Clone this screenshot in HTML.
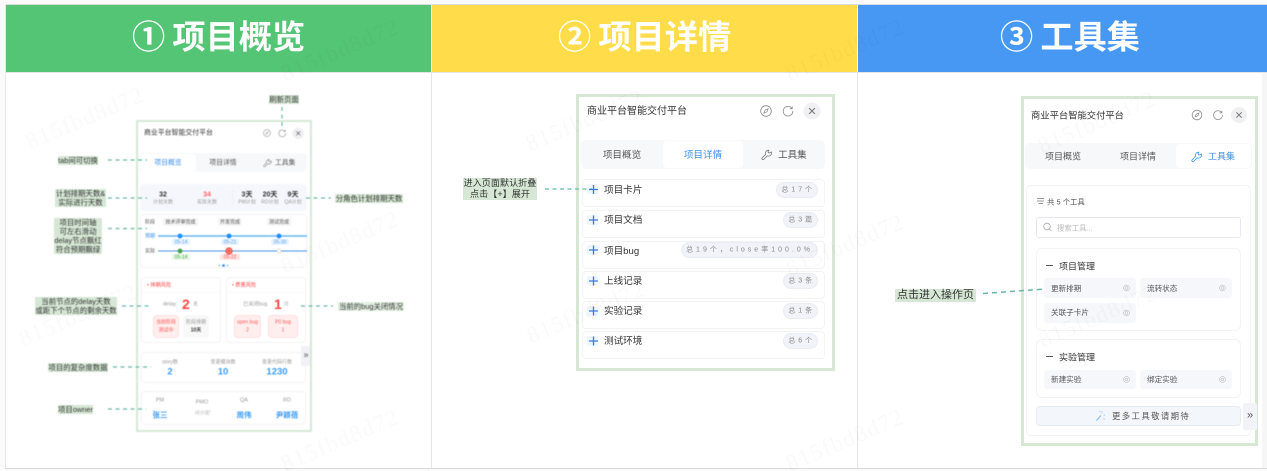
<!DOCTYPE html>
<html lang="zh"><head><meta charset="utf-8"><title>项目概览</title>
<style>
html,body{margin:0;padding:0;background:#fafafa}
#p{position:relative;width:1267px;height:471px;overflow:hidden;background:#fafafa;font-family:"Liberation Sans","Noto Sans CJK SC",sans-serif;color:#333}
.b{position:absolute;box-sizing:border-box}
.t{position:absolute;white-space:nowrap;line-height:1;transform:translateY(-50%);margin-top:1px}
.c{position:absolute;white-space:nowrap;line-height:1;transform:translate(-50%,-50%);text-align:center;margin-top:1px}
.h{color:#fff;font-weight:700;font-size:33.2px;top:38px;margin-top:0;word-spacing:-2px}
.f{border:2px solid #d6e8d4}
.f3{border:3px solid #d6e8d4}
.card{background:#fff;border:1px solid #f3f3f6;border-radius:4px}
.a{background:#d6e8d5;color:#333;font-size:7.4px;line-height:9px;text-align:center;white-space:nowrap;display:flex;align-items:center;justify-content:center}
.g{color:#999}.bl{color:#3d8fe8}.d{color:#555}
.pb{background:#f1f3f8;border:1px solid #e9ecf3;border-radius:8px;height:16px}
.pt{font-size:7px;letter-spacing:.5px;color:#888}
.pl{background:#eef5ff;border-radius:2px;width:11px;height:10px}
.tb{background:#f5f7fb;border-radius:3px;height:20px;width:92px}
.w{position:absolute;white-space:nowrap;font-family:"Liberation Serif",serif;font-size:23px;letter-spacing:1.500px;line-height:1;color:rgba(0,0,0,.022);transform:translate(-50%,-50%) rotate(-23deg)}
</style></head><body><div id="p">

<div class="b" style="left:5px;top:5px;width:1262px;height:463px;background:#fff"></div>
<div class="b" style="left:5px;top:4px;width:1262px;height:1px;background:#dcdce0"></div>
<div class="b" style="left:5px;top:4px;width:1px;height:464px;background:#e8e8ea"></div>
<div class="b" style="left:5px;top:468px;width:1262px;height:1px;background:#d8d8da"></div>
<div class="b" style="left:431px;top:72px;width:1px;height:396px;background:#e6e6e8"></div>
<div class="b" style="left:857px;top:72px;width:1px;height:396px;background:#e6e6e8"></div>
<div class="b" style="left:1262px;top:72px;width:5px;height:396px;background:#f6f6f6"></div>
<div class="b" style="left:5px;top:72px;width:1262px;height:1px;background:#e4e4e6"></div>

<div class="b" style="left:6px;top:5px;width:425px;height:67px;background:#53c575"></div>
<div class="b" style="left:432px;top:5px;width:425px;height:67px;background:#ffdd4a"></div>
<div class="b" style="left:858px;top:5px;width:409px;height:67px;background:#4698f2"></div>
<div class="t h" style="left:132px">① 项目概览</div>
<div class="t h" style="left:558px">② 项目详情</div>
<div class="t h" style="left:1000px">③ 工具集</div>

<!-- panel 1 -->
<div class="b f" style="left:136px;top:120px;width:176px;height:312px;background:#fff"></div>
<div class="t" style="left:144px;top:133px;font-size:6.9px">商业平台智能交付平台</div>

<div class="b" style="left:140px;top:153px;width:167px;height:19px;background:#f6f8fa;border-radius:4px"></div>
<div class="b" style="left:141px;top:154px;width:55px;height:18px;background:#fff;border-radius:4px"></div>
<div class="c bl" style="left:168px;top:163px;font-size:6.8px">项目概览</div>
<div class="c d" style="left:223px;top:163px;font-size:6.8px">项目详情</div>
<div class="t d" style="left:275px;top:163px;font-size:6.8px">工具集</div>

<div class="b" style="left:140px;top:184px;width:167px;height:27px;background:#f5f7fc;border-radius:4px"></div>
<div class="b" style="left:232px;top:190px;width:1px;height:15px;background:#eceef3"></div>
<div class="c" style="left:163px;top:194px;font-size:7px;font-weight:700">32</div>
<div class="c" style="left:207px;top:194px;font-size:7px;font-weight:700;color:#f66">34</div>
<div class="c" style="left:247px;top:194px;font-size:7px;font-weight:700">3天</div>
<div class="c" style="left:270px;top:194px;font-size:7px;font-weight:700">20天</div>
<div class="c" style="left:293px;top:194px;font-size:7px;font-weight:700">9天</div>
<div class="c g" style="left:163px;top:202px;font-size:5px">计划天数</div>
<div class="c g" style="left:207px;top:202px;font-size:5px">实际天数</div>
<div class="c g" style="left:247px;top:202px;font-size:5px">PM计划</div>
<div class="c g" style="left:270px;top:202px;font-size:5px">RD计划</div>
<div class="c g" style="left:293px;top:202px;font-size:5px">QA计划</div>

<div class="b card" style="left:140px;top:214px;width:167px;height:54px"></div>
<div class="t d" style="left:145px;top:222px;font-size:5px">阶段</div>
<div class="b" style="left:163px;top:218px;width:35px;height:8px;background:#f5f5f5;border-radius:2px"></div>
<div class="b" style="left:218px;top:218px;width:24px;height:8px;background:#f5f5f5;border-radius:2px"></div>
<div class="b" style="left:267px;top:218px;width:24px;height:8px;background:#f5f5f5;border-radius:2px"></div>
<div class="c d" style="left:180.5px;top:221.500px;font-size:5px">技术评审完成</div>
<div class="c d" style="left:230px;top:221.500px;font-size:5px">开发完成</div>
<div class="c d" style="left:279px;top:221.500px;font-size:5px">测试完成</div>
<div class="t bl" style="left:145px;top:236px;font-size:5px">预期</div>
<div class="t d" style="left:145px;top:251px;font-size:5px">实际</div>
<div class="b" style="left:172px;top:239px;width:18px;height:6px;background:#e8f3ff;border-radius:1px"></div>
<div class="b" style="left:221px;top:239px;width:18px;height:6px;background:#e8f3ff;border-radius:1px"></div>
<div class="b" style="left:271px;top:239px;width:18px;height:6px;background:#e8f3ff;border-radius:1px"></div>
<div class="b" style="left:172px;top:254px;width:18px;height:6px;background:#e6f6e6;border-radius:1px"></div>
<div class="b" style="left:220px;top:254px;width:20px;height:6px;background:#ffe4e4;border-radius:1px"></div>
<div class="c" style="left:181px;top:241.500px;font-size:5px;color:#5a9fe6">05-14</div>
<div class="c" style="left:230px;top:241.500px;font-size:5px;color:#5a9fe6">05-21</div>
<div class="c" style="left:280px;top:241.500px;font-size:5px;color:#5a9fe6">05-30</div>
<div class="c" style="left:181px;top:256.500px;font-size:5px;color:#4caf50">05-14</div>
<div class="c" style="left:230px;top:256.500px;font-size:5px;color:#f55">05-22</div>

<div class="b card" style="left:141px;top:277px;width:80px;height:66px"></div>
<div class="b card" style="left:226px;top:277px;width:80px;height:66px"></div>
<div class="b" style="left:142px;top:292px;width:78px;height:1px;background:#f8f8f8"></div>
<div class="b" style="left:227px;top:292px;width:78px;height:1px;background:#f8f8f8"></div>
<div class="t" style="left:147px;top:285px;font-size:5.2px;color:#f44">• 排期风险</div>
<div class="t" style="left:232px;top:285px;font-size:5.2px;color:#f44">• 质量风险</div>
<div class="t g" style="left:163px;top:304px;font-size:5.5px">delay</div>
<div class="t" style="left:182px;top:303px;font-size:14px;font-weight:700;color:#f44">2</div>
<div class="t g" style="left:193px;top:304px;font-size:5px">天</div>
<div class="t g" style="left:243px;top:304px;font-size:5.2px">已关闭bug</div>
<div class="t" style="left:274px;top:303px;font-size:14px;font-weight:700;color:#f44">1</div>
<div class="t g" style="left:284px;top:304px;font-size:5px">/3</div>
<div class="b" style="left:153px;top:315px;width:26px;height:23px;background:#ffeeee;border:1px solid #fde0e0;border-radius:4px"></div>
<div class="b" style="left:183px;top:315px;width:26px;height:23px;background:#f8f8f8;border-radius:4px"></div>
<div class="b" style="left:234px;top:315px;width:27px;height:23px;background:#ffeeee;border:1px solid #fde0e0;border-radius:4px"></div>
<div class="b" style="left:268px;top:315px;width:30px;height:23px;background:#ffeeee;border:1px solid #fde0e0;border-radius:4px"></div>
<div class="c" style="left:166px;top:321.500px;font-size:5px;color:#f55">当前阶段</div>
<div class="c" style="left:166px;top:329.500px;font-size:5px;color:#f55">测试中</div>
<div class="c g" style="left:196px;top:321.500px;font-size:5px">阶段排期</div>
<div class="c" style="left:196px;top:329.500px;font-size:5px;font-weight:700">10天</div>
<div class="c" style="left:247.5px;top:321.500px;font-size:5px;color:#f55">open bug</div>
<div class="c" style="left:247.5px;top:329.500px;font-size:5px;color:#f55">2</div>
<div class="c" style="left:283px;top:321.500px;font-size:5px;color:#f55">P0 bug</div>
<div class="c" style="left:283px;top:329.500px;font-size:5px;color:#f55">1</div>

<div class="b card" style="left:141px;top:352px;width:165px;height:31px"></div>
<div class="c g" style="left:170px;top:361.500px;font-size:5px">story数</div>
<div class="c g" style="left:223px;top:361.500px;font-size:5px">变更模块数</div>
<div class="c g" style="left:277px;top:361.500px;font-size:5px">变更代码行数</div>
<div class="c" style="left:170px;top:370.500px;font-size:9.5px;font-weight:700;color:#3b9bf5">2</div>
<div class="c" style="left:223px;top:370.500px;font-size:9.5px;font-weight:700;color:#3b9bf5">10</div>
<div class="c" style="left:277px;top:370.500px;font-size:9.5px;font-weight:700;color:#3b9bf5">1230</div>
<div class="b" style="left:301px;top:346px;width:9px;height:20px;background:#f0f2f6;border-radius:2px 0 0 2px"></div>
<div class="c d" style="left:306px;top:354px;font-size:9px">»</div>

<div class="b card" style="left:141px;top:391px;width:165px;height:34px"></div>
<div class="c g" style="left:160px;top:399.500px;font-size:5.5px">PM</div>
<div class="c g" style="left:202px;top:401.500px;font-size:5.5px">PMO</div>
<div class="c g" style="left:244px;top:399.500px;font-size:5.5px">QA</div>
<div class="c g" style="left:287px;top:399.500px;font-size:5.5px">RD</div>
<div class="c" style="left:160px;top:413.500px;font-size:7.5px;font-weight:700;color:#3b9bf5">张三</div>
<div class="c" style="left:202px;top:412.500px;font-size:5.2px;font-style:italic;color:#bbb">待分配</div>
<div class="c" style="left:244px;top:413.500px;font-size:7.5px;font-weight:700;color:#3b9bf5">周伟</div>
<div class="c" style="left:287px;top:413.500px;font-size:7.5px;font-weight:700;color:#3b9bf5">尹颖蓓</div>

<!-- annotations panel 1 -->
<div class="b a" style="left:269px;top:95px;width:30px;height:9px">刷新页面</div>
<div class="b a" style="left:58px;top:156px;width:40px;height:9px">tab间可切换</div>
<div class="b a" style="left:55px;top:189px;width:51px;height:18px">计划排期天数&amp;<br>实际进行天数</div>
<div class="b a" style="left:54px;top:218px;width:48px;height:36px">项目时间轴<br>可左右滑动<br>delay节点飘红<br>符合预期飘绿</div>
<div class="b a" style="left:35px;top:297px;width:82px;height:18px">当前节点的delay天数<br>或距下个节点的剩余天数</div>
<div class="b a" style="left:48px;top:363px;width:60px;height:9px">项目的复杂度数据</div>
<div class="b a" style="left:58px;top:405px;width:35px;height:9px">项目owner</div>
<div class="b a" style="left:335px;top:194px;width:68px;height:9px">分角色计划排期天数</div>
<div class="b a" style="left:338px;top:302px;width:66px;height:9px;background:#e2f0e0">当前的bug关闭情况</div>

<!-- panel 2 -->
<div class="b f3" style="left:576px;top:94px;width:259px;height:277px;background:#fff"></div>
<div class="t" style="left:587px;top:110.500px;font-size:10px">商业平台智能交付平台</div>
<div class="b" style="left:581px;top:140px;width:244px;height:29px;background:#f6f8fa;border-radius:5px"></div>
<div class="b" style="left:663px;top:141px;width:80px;height:27px;background:#fff;border-radius:4px"></div>
<div class="c d" style="left:622px;top:154.500px;font-size:9.6px">项目概览</div>
<div class="c bl" style="left:703px;top:154.500px;font-size:9.6px">项目详情</div>
<div class="t d" style="left:778px;top:154.500px;font-size:9.6px">工具集</div>

<div class="b card" style="left:582px;top:179px;width:243px;height:28px"></div>
<div class="b card" style="left:582px;top:210px;width:243px;height:28px"></div>
<div class="b card" style="left:582px;top:241px;width:243px;height:28px"></div>
<div class="b card" style="left:582px;top:271px;width:243px;height:28px"></div>
<div class="b card" style="left:582px;top:301px;width:243px;height:28px"></div>
<div class="b card" style="left:582px;top:331px;width:243px;height:28px"></div>
<div class="b pl" style="left:587px;top:184px"></div>
<div class="b pl" style="left:587px;top:215px"></div>
<div class="b pl" style="left:587px;top:245px"></div>
<div class="b pl" style="left:587px;top:276px"></div>
<div class="b pl" style="left:587px;top:306px"></div>
<div class="b pl" style="left:587px;top:336px"></div>
<div class="t" style="left:604px;top:189.500px;font-size:9.6px">项目卡片</div>
<div class="t" style="left:604px;top:220px;font-size:9.6px">项目文档</div>
<div class="t" style="left:604px;top:250.500px;font-size:9.6px">项目bug</div>
<div class="t" style="left:604px;top:281px;font-size:9.6px">上线记录</div>
<div class="t" style="left:604px;top:311px;font-size:9.6px">实验记录</div>
<div class="t" style="left:604px;top:341px;font-size:9.6px">测试环境</div>
<div class="b pb" style="left:776px;top:182px;width:42px"></div>
<div class="b pb" style="left:783px;top:212px;width:35px"></div>
<div class="b pb" style="left:681px;top:242px;width:137px"></div>
<div class="b pb" style="left:783px;top:273px;width:35px"></div>
<div class="b pb" style="left:783px;top:303px;width:35px"></div>
<div class="b pb" style="left:783px;top:333px;width:35px"></div>
<div class="c pt" style="left:797px;top:189px">总 1 7 个</div>
<div class="c pt" style="left:800.5px;top:219px">总 3 篇</div>
<div class="c pt" style="left:749.5px;top:249px;letter-spacing:3px">总19个，close率100.0%</div>
<div class="c pt" style="left:800.5px;top:280px">总 3 条</div>
<div class="c pt" style="left:800.5px;top:310px">总 1 条</div>
<div class="c pt" style="left:800.5px;top:340px">总 6 个</div>
<div class="b a" style="left:463px;top:178px;width:74px;height:22px;font-size:9.1px;line-height:11px">进入页面默认折叠<br>点击【+】展开</div>

<!-- panel 3 -->
<div class="b f3" style="left:1021px;top:96px;width:237px;height:350px;background:#fff"></div>
<div class="t" style="left:1031px;top:115px;font-size:9.3px">商业平台智能交付平台</div>
<div class="b" style="left:1025px;top:143px;width:227px;height:26px;background:#f6f8fa;border-radius:5px"></div>
<div class="b" style="left:1176px;top:144px;width:75px;height:24px;background:#fff;border-radius:4px"></div>
<div class="c d" style="left:1063px;top:156px;font-size:9px">项目概览</div>
<div class="c d" style="left:1138px;top:156px;font-size:9px">项目详情</div>
<div class="t bl" style="left:1208px;top:156px;font-size:9px">工具集</div>

<div class="b card" style="left:1026px;top:185px;width:225px;height:251px;border-radius:5px"></div>
<div class="t d" style="left:1047px;top:200.500px;font-size:7.4px">共 5 个工具</div>
<div class="b" style="left:1036px;top:217px;width:205px;height:21px;background:#fff;border:1px solid #e6e8f0;border-radius:3px"></div>
<div class="t" style="left:1057px;top:227px;font-size:7.4px;color:#bbb">搜索工具...</div>
<div class="b card" style="left:1036px;top:248px;width:205px;height:83px;border-radius:6px"></div>
<div class="b card" style="left:1036px;top:339px;width:205px;height:59px;border-radius:6px"></div>
<div class="t" style="left:1059px;top:265.500px;font-size:9px">项目管理</div>
<div class="t" style="left:1059px;top:356.500px;font-size:9px">实验管理</div>
<div class="b tb" style="left:1044px;top:278px"></div>
<div class="b tb" style="left:1140px;top:278px"></div>
<div class="b tb" style="left:1044px;top:303px"></div>
<div class="b tb" style="left:1044px;top:370px;height:19px"></div>
<div class="b tb" style="left:1140px;top:370px;height:19px"></div>
<div class="t d" style="left:1051px;top:287.500px;font-size:7.6px">更新排期</div>
<div class="t d" style="left:1147px;top:287.500px;font-size:7.6px">流转状态</div>
<div class="t d" style="left:1051px;top:312px;font-size:7.6px">关联子卡片</div>
<div class="t d" style="left:1051px;top:378.500px;font-size:7.6px">新建实验</div>
<div class="t d" style="left:1147px;top:378.500px;font-size:7.6px">绑定实验</div>
<div class="b" style="left:1036px;top:406px;width:205px;height:20px;background:#f3f6fb;border:1px solid #e6ebf3;border-radius:4px"></div>
<div class="t d" style="left:1112px;top:415px;font-size:8.4px;letter-spacing:1.400px">更多工具敬请期待</div>
<div class="b" style="left:1243px;top:403px;width:14px;height:27px;background:#f1f3f8;border-radius:2px"></div>
<div class="c d" style="left:1250px;top:415px;font-size:11px">»</div>
<div class="b a" style="left:895px;top:289px;width:81px;height:13px;font-size:11px;line-height:13px">点击进入操作页</div>

<!-- watermarks -->
<div class="w" style="left:340px;top:50px">815fbd8d72</div>
<div class="w" style="left:845px;top:50px">815fbd8d72</div>
<div class="w" style="left:85px;top:118px">815fbd8d72</div>
<div class="w" style="left:585px;top:120px">815fbd8d72</div>
<div class="w" style="left:1097px;top:122px">815fbd8d72</div>
<div class="w" style="left:340px;top:242px">815fbd8d72</div>
<div class="w" style="left:845px;top:245px">815fbd8d72</div>
<div class="w" style="left:78px;top:315px">815fbd8d72</div>
<div class="w" style="left:586px;top:312px">815fbd8d72</div>
<div class="w" style="left:1098px;top:316px">815fbd8d72</div>
<div class="w" style="left:340px;top:440px">815fbd8d72</div>
<div class="w" style="left:845px;top:440px">815fbd8d72</div>

<!-- vector layer -->
<svg class="b" style="left:0;top:0" width="1267" height="471" viewBox="0 0 1267 471" fill="none">
<symbol id="comp" viewBox="0 0 12 12"><circle cx="6" cy="6" r="5.3" stroke="#888" stroke-width=".8" fill="none"/><path d="M8.2 3.8L6.9 6.9 3.8 8.2 5.1 5.1Z" stroke="#888" stroke-width=".7" fill="none"/></symbol>
<symbol id="ref" viewBox="0 0 12 12"><path d="M9.9 3.4A4.8 4.8 0 1 0 10.8 6" stroke="#888" stroke-width=".8" fill="none"/><path d="M10.2 1.4V3.7H7.9" stroke="#888" stroke-width=".8" fill="none"/></symbol>
<symbol id="cls" viewBox="0 0 16 16"><circle cx="8" cy="8" r="8" fill="#f0f0f2"/><path d="M5.3 5.3L10.7 10.7M10.7 5.3L5.3 10.7" stroke="#777" stroke-width="1"/></symbol>
<symbol id="wr" viewBox="0 0 12 12"><path d="M7.5 1.2a3.2 3.2 0 0 0-2.6 4.3L1.2 9.2a1.1 1.1 0 0 0 1.6 1.6l3.7-3.7a3.2 3.2 0 0 0 4.3-4L8.8 4.1 7.6 3.8 7.3 2.6 8.3 1.3a3 3 0 0 0-.8-.1Z" stroke="currentColor" stroke-width=".8" fill="none"/></symbol>
<symbol id="tg" viewBox="0 0 10 10"><circle cx="5" cy="5" r="4.2" stroke="#aaa" stroke-width=".7" fill="none"/><circle cx="5" cy="5" r="2" stroke="#aaa" stroke-width=".7" fill="none"/></symbol>

<!-- panel 1 icons -->
<use href="#comp" x="263" y="129" width="8" height="8"/>
<use href="#ref" x="278" y="129" width="8.5" height="8.5"/>
<use href="#cls" x="292.500" y="127.500" width="11.500" height="11.500"/>
<use href="#wr" x="263" y="158.500" width="9" height="9" style="color:#888"/>

<!-- timeline -->
<path d="M158 236H307" stroke="#64b5f6" stroke-width="1.6"/>
<path d="M158 251H307" stroke="#4a90e2" stroke-width="1"/>
<circle cx="180" cy="236" r="2.4" fill="#1890ff"/><circle cx="229" cy="236" r="2.4" fill="#1890ff"/><circle cx="279" cy="236" r="2.4" fill="#1890ff"/>
<circle cx="180" cy="251" r="2.4" fill="#43a047"/>
<circle cx="229" cy="251" r="3.6" fill="#f44336"/><circle cx="229" cy="251" r="1.8" stroke="#ffd0d0" stroke-width=".7"/>
<circle cx="279" cy="251" r="2" fill="#fff" stroke="#ccc" stroke-width=".7"/>
<circle cx="219.500" cy="265.500" r="1" fill="#9cc8f5"/><circle cx="223.500" cy="265.500" r="1.300" fill="#1890ff"/><circle cx="227.500" cy="265.500" r="1" fill="#9cc8f5"/>

<!-- dashes -->
<g stroke="#69b8a6" stroke-width="1.200" stroke-dasharray="4 3.500">
<path d="M282 107V127"/>
<path d="M108 160H147"/>
<path d="M108 198H147"/>
<path d="M108 228.500H147"/>
<path d="M122 306H151"/>
<path d="M113 367H151"/>
<path d="M108 409H146"/>
<path d="M306 198H331"/>
<path d="M301 306H333"/>
<path d="M545 189H592"/>
<path d="M983 293.500L1045 289" stroke-width="1.500" stroke-dasharray="5 4"/>
</g>

<!-- panel 2 icons -->
<use href="#comp" x="760" y="105" width="12" height="12"/>
<use href="#ref" x="782" y="105" width="12" height="12"/>
<use href="#cls" x="803.500" y="102.500" width="17" height="17"/>
<use href="#wr" x="761" y="149" width="11.500" height="11.500" style="color:#777"/>
<g stroke="#2f80e6" stroke-width="1.300">
<path d="M589 189.500H598M593.500 185V194"/>
<path d="M589 220H598M593.500 215.500V224.500"/>
<path d="M589 250H598M593.500 245.500V254.500"/>
<path d="M589 281H598M593.500 276.500V285.500"/>
<path d="M589 311H598M593.500 306.500V315.500"/>
<path d="M589 341H598M593.500 336.500V345.500"/>
</g>

<!-- panel 3 icons -->
<use href="#comp" x="1191.500" y="109.500" width="11" height="11"/>
<use href="#ref" x="1212.500" y="109.500" width="11" height="11"/>
<use href="#cls" x="1231" y="107" width="16" height="16"/>
<use href="#wr" x="1191" y="151" width="11.500" height="11.500" style="color:#3d8fe8"/>
<path d="M1037 198.500H1044M1037 201H1044M1038.500 203.500H1043" stroke="#777" stroke-width=".7"/>
<circle cx="1047" cy="226.500" r="3.300" stroke="#aaa" stroke-width=".8"/><path d="M1049.500 229L1051.500 231" stroke="#aaa" stroke-width=".8"/>
<path d="M1046 265.500H1053M1046 356.500H1053" stroke="#555" stroke-width="1.100"/>
<use href="#tg" x="1123" y="284.500" width="7" height="7"/>
<use href="#tg" x="1219" y="284.500" width="7" height="7"/>
<use href="#tg" x="1123" y="309.500" width="7" height="7"/>
<use href="#tg" x="1123" y="376" width="7" height="7"/>
<use href="#tg" x="1219" y="376" width="7" height="7"/>
<path d="M1096.500 420.500L1101 415.500" stroke="#7cb8f5" stroke-width="1"/>
<path d="M1102 411.500V413.500M1105 415H1103M1104.500 419.500L1103 418M1100.500 411.500L1099 412" stroke="#7cb8f5" stroke-width=".8" stroke-dasharray="1 .6"/>
</svg>

<!-- soften to match the source's upscaled look -->
<div class="b" style="left:6px;top:73px;width:425px;height:395px;backdrop-filter:blur(.4px)"></div>
</div></body></html>
